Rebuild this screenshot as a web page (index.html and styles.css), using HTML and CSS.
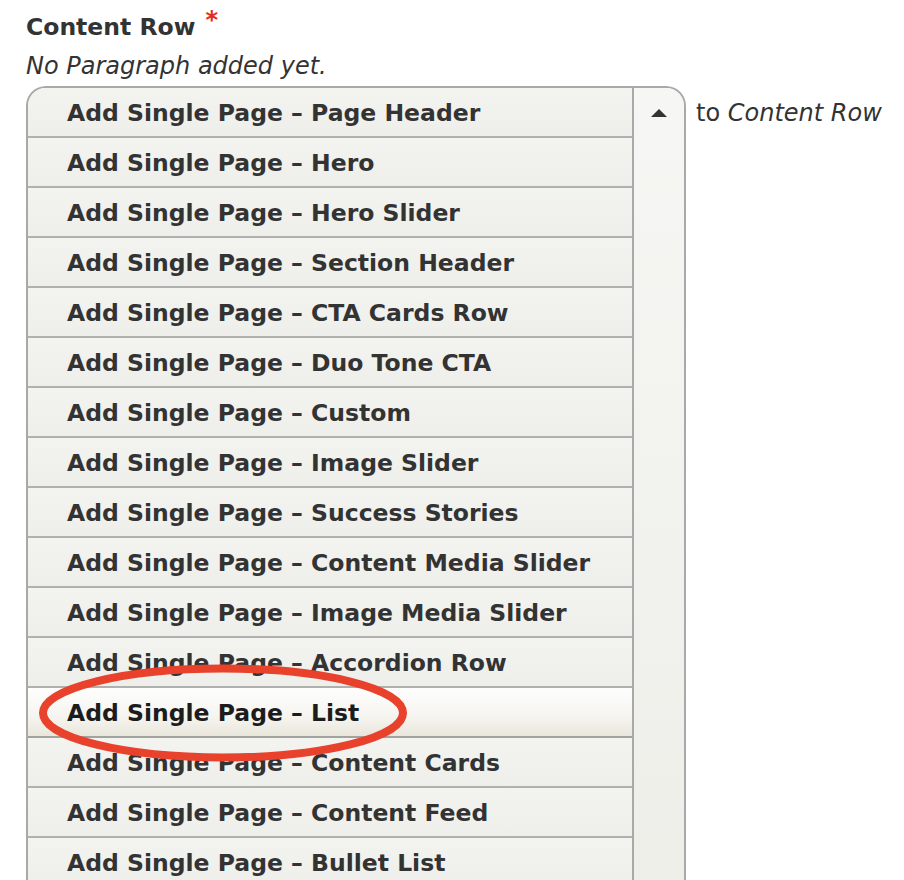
FILE: index.html
```html
<!DOCTYPE html>
<html lang="en">
<head>
<meta charset="utf-8">
<title>Content Row</title>
<link rel="stylesheet" href="styles.css">
</head>
<body>
<div class="field">
  <div class="label">Content Row<span class="required">*</span></div>
  <div class="description">No Paragraph added yet.</div>
  <div class="widget">
    <div class="dropbutton">
      <ul class="actions">
        <li class="action">Add Single Page – Page Header</li>
        <li class="action">Add Single Page – Hero</li>
        <li class="action">Add Single Page – Hero Slider</li>
        <li class="action">Add Single Page – Section Header</li>
        <li class="action">Add Single Page – CTA Cards Row</li>
        <li class="action">Add Single Page – Duo Tone CTA</li>
        <li class="action">Add Single Page – Custom</li>
        <li class="action">Add Single Page – Image Slider</li>
        <li class="action">Add Single Page – Success Stories</li>
        <li class="action">Add Single Page – Content Media Slider</li>
        <li class="action">Add Single Page – Image Media Slider</li>
        <li class="action">Add Single Page – Accordion Row</li>
        <li class="action active">Add Single Page – List</li>
        <li class="action">Add Single Page – Content Cards</li>
        <li class="action">Add Single Page – Content Feed</li>
        <li class="action">Add Single Page – Bullet List</li>
      </ul>
      <div class="toggle"><span class="arrow"></span></div>
    </div>
    <div class="suffix">to <em>Content Row</em></div>
  </div>
</div>
<svg class="annotation" width="380" height="110" viewBox="0 0 380 110" aria-hidden="true">
  <ellipse cx="190" cy="55" rx="180" ry="44.5" fill="none" stroke="#e8412c" stroke-width="8"/>
</svg>
</body>
</html>
```

FILE: styles.css
```css
html, body {
  margin: 0;
  padding: 0;
  background: #ffffff;
  height: 880px;
  overflow: hidden;
}

body {
  font-family: "DejaVu Sans", "Liberation Sans", sans-serif;
  color: #333333;
  position: relative;
}

.field {
  padding: 5px 0 0 26px;
}

.label {
  font-size: 23.5px;
  font-weight: bold;
  line-height: 30px;
  margin-bottom: 9px;
}

.required {
  color: #e62a1c;
  font-weight: bold;
  font-size: 24px;
  margin-left: 10px;
  vertical-align: 7px;
}

.description {
  font-size: 24px;
  font-style: italic;
  line-height: 30px;
  margin-bottom: 5px;
}

.widget {
  display: flex;
  align-items: flex-start;
}

.dropbutton {
  display: flex;
  width: 656px;
  border: 2px solid #a9a9a7;
  border-bottom: none;
  border-radius: 20px 20px 0 0;
  overflow: hidden;
}

.actions {
  list-style: none;
  margin: 0;
  padding: 0;
  flex: 1;
}

.action {
  height: 48px;
  line-height: 50px;
  padding-left: 39px;
  font-size: 23.5px;
  font-weight: bold;
  color: #333333;
  white-space: nowrap;
  overflow: hidden;
  background: linear-gradient(#f3f3f0, #eeeeea);
  border-bottom: 2px solid #b0b0ae;
}

.action.active {
  color: #1c1c1c;
  background: linear-gradient(#fefefd, #f5f4ef 60%, #e9e7dc);
  border-bottom-color: #a2a29f;
}

.toggle {
  width: 52px;
  border-left: 2px solid #a9a9a7;
  background: linear-gradient(#f6f6f4, #eeeee9);
  display: flex;
  justify-content: center;
  padding-top: 21px;
  box-sizing: border-box;
}

.arrow {
  width: 0;
  height: 0;
  border-left: 8px solid transparent;
  border-right: 8px solid transparent;
  border-bottom: 8px solid #333333;
}

.suffix {
  font-size: 24px;
  line-height: 30px;
  padding: 12px 0 0 10px;
  white-space: nowrap;
}

.suffix em {
  font-style: italic;
}

.annotation {
  position: absolute;
  left: 33px;
  top: 658px;
}
```
